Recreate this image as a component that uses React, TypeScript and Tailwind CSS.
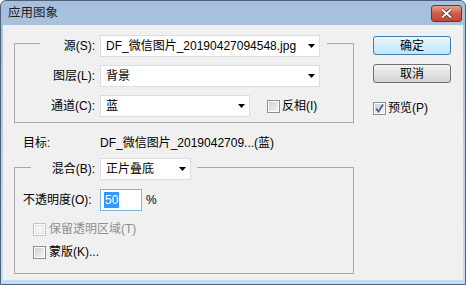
import React from "react"

function Arrow() {
  return (
    <svg width="7" height="4" viewBox="0 0 7 4" className="shrink-0">
      <path d="M0 0h7L3.5 4z" fill="#000" />
    </svg>
  )
}

function Select({ value, className }: { value: string; className: string }) {
  return (
    <div
      className={`flex h-[22px] items-center justify-between border border-[#dedede] bg-white pl-[5px] pr-[4px] ${className}`}
    >
      <span className="whitespace-nowrap">{value}</span>
      <Arrow />
    </div>
  )
}

function Checkbox({ checked, disabled }: { checked?: boolean; disabled?: boolean }) {
  return (
    <div
      className={`flex h-[13px] w-[13px] shrink-0 items-center justify-center border bg-white ${
        disabled ? "border-[#c4c4c4]" : "border-[#8e8f8f]"
      }`}
    >
      <div
        className={`relative h-[9px] w-[9px] ${
          disabled ? "bg-[#f4f4f4] border border-[#e2e2e2]" : "bg-gradient-to-br from-[#cbcfd5] to-[#f6f6f6]"
        }`}
      >
        {checked && (
          <svg width="11" height="11" viewBox="0 0 11 11" className="absolute -left-[1px] -top-[1px]">
            <path d="M2 5.5 L4.5 8.5 L9 1.5" stroke="#4a5f97" strokeWidth="1.8" fill="none" />
          </svg>
        )}
      </div>
    </div>
  )
}

function Label({ text }: { text: string }) {
  return <div className="w-[60px] shrink-0 pr-[5px] text-right whitespace-nowrap">{text}</div>
}

export default function App() {
  return (
    <div className="flex h-[285px] w-[466px] flex-col overflow-hidden rounded-t-[6px] border border-[#4f6178] bg-gradient-to-b from-[#a5bfdc] to-[#c8dcf1] font-['Liberation_Sans','Noto_Sans_CJK_SC',sans-serif] text-[12px] leading-[16px] text-black">
      {/* title bar */}
      <div className="flex h-[24px] shrink-0 items-start justify-between">
        <div className="pl-[7px] pt-[4px] text-[12.5px] text-[#1e1e1e]">应用图象</div>
        <div className="mr-[3px] mt-[4px] flex h-[17px] w-[31px] items-center justify-center rounded-[3px] border border-[#7a2f26] bg-gradient-to-b from-[#e4a08f] via-[#cf5d4a] to-[#c24632]">
          <svg width="13" height="11" viewBox="0 0 13 11">
            <path d="M2 1.5 L11 9.5 M11 1.5 L2 9.5" stroke="#4a2a26" strokeWidth="3.6" />
            <path d="M2 1.5 L11 9.5 M11 1.5 L2 9.5" stroke="#fff" strokeWidth="2" />
          </svg>
        </div>
      </div>

      {/* content */}
      <div className="mx-[2px] flex h-[255px] shrink-0 bg-[#f0f0f0] pl-[11px]">
        {/* left column */}
        <div className="flex w-[340px] shrink-0 flex-col">
          {/* group 1 */}
          <div className="mt-[18px] border border-[#a9a9a9] pb-[5px]">
            <div className="-mt-[9px] ml-[25px] flex w-fit items-center bg-[#f0f0f0] pr-[7px]">
              <Label text="源(S):" />
              <Select value="DF_微信图片_20190427094548.jpg" className="w-[220px]" />
            </div>
            <div className="mt-[8px] ml-[25px] flex items-center">
              <Label text="图层(L):" />
              <Select value="背景" className="w-[220px]" />
            </div>
            <div className="mt-[8px] ml-[25px] flex items-center">
              <Label text="通道(C):" />
              <Select value="蓝" className="w-[150px]" />
              <div className="ml-[17px]">
                <Checkbox />
              </div>
              <span className="ml-[2px]">反相(I)</span>
            </div>
          </div>

          {/* target */}
          <div className="mt-[12px] ml-[9px] flex">
            <div className="w-[77px] shrink-0">目标:</div>
            <div className="whitespace-nowrap">DF_微信图片_2019042709...(蓝)</div>
          </div>

          {/* group 2 */}
          <div className="mt-[16px] border border-[#a9a9a9] pb-[13px]">
            <div className="-mt-[10px] ml-[16px] flex w-fit items-center bg-[#f0f0f0] pr-[6px]">
              <div className="w-[69px] shrink-0 pr-[5px] text-right whitespace-nowrap">混合(B):</div>
              <Select value="正片叠底" className="w-[91px]" />
            </div>
            <div className="mt-[9px] ml-[8px] flex items-center">
              <div className="w-[77px] shrink-0 whitespace-nowrap">不透明度(O):</div>
              <div className="flex h-[22px] w-[42px] items-center border border-[#7eb4ea] bg-white pl-[3px]">
                <span className="bg-[#3399ff] px-[1px] text-white">50</span>
              </div>
              <span className="ml-[4px]">%</span>
            </div>
            <div className="mt-[10px] ml-[18px] flex items-center">
              <Checkbox disabled />
              <span className="ml-[3px] text-[#8f8f8f]">保留透明区域(T)</span>
            </div>
            <div className="mt-[7px] ml-[18px] flex items-center">
              <Checkbox />
              <span className="ml-[3px]">蒙版(K)...</span>
            </div>
          </div>
        </div>

        {/* right column */}
        <div className="ml-[19px] flex w-[78px] flex-col">
          <button className="mt-[11px] h-[19px] rounded-[3px] border border-[#3c7fb1] bg-gradient-to-b from-[#eaf6fd] to-[#bee6fd] leading-[16px]">
            确定
          </button>
          <button className="mt-[9px] h-[19px] rounded-[3px] border border-[#707070] bg-gradient-to-b from-[#f2f2f2] to-[#d4d4d4] leading-[16px]">
            取消
          </button>
          <div className="mt-[17px] flex items-center">
            <Checkbox checked />
            <span className="ml-[2px]">预览(P)</span>
          </div>
        </div>
      </div>
    </div>
  )
}
